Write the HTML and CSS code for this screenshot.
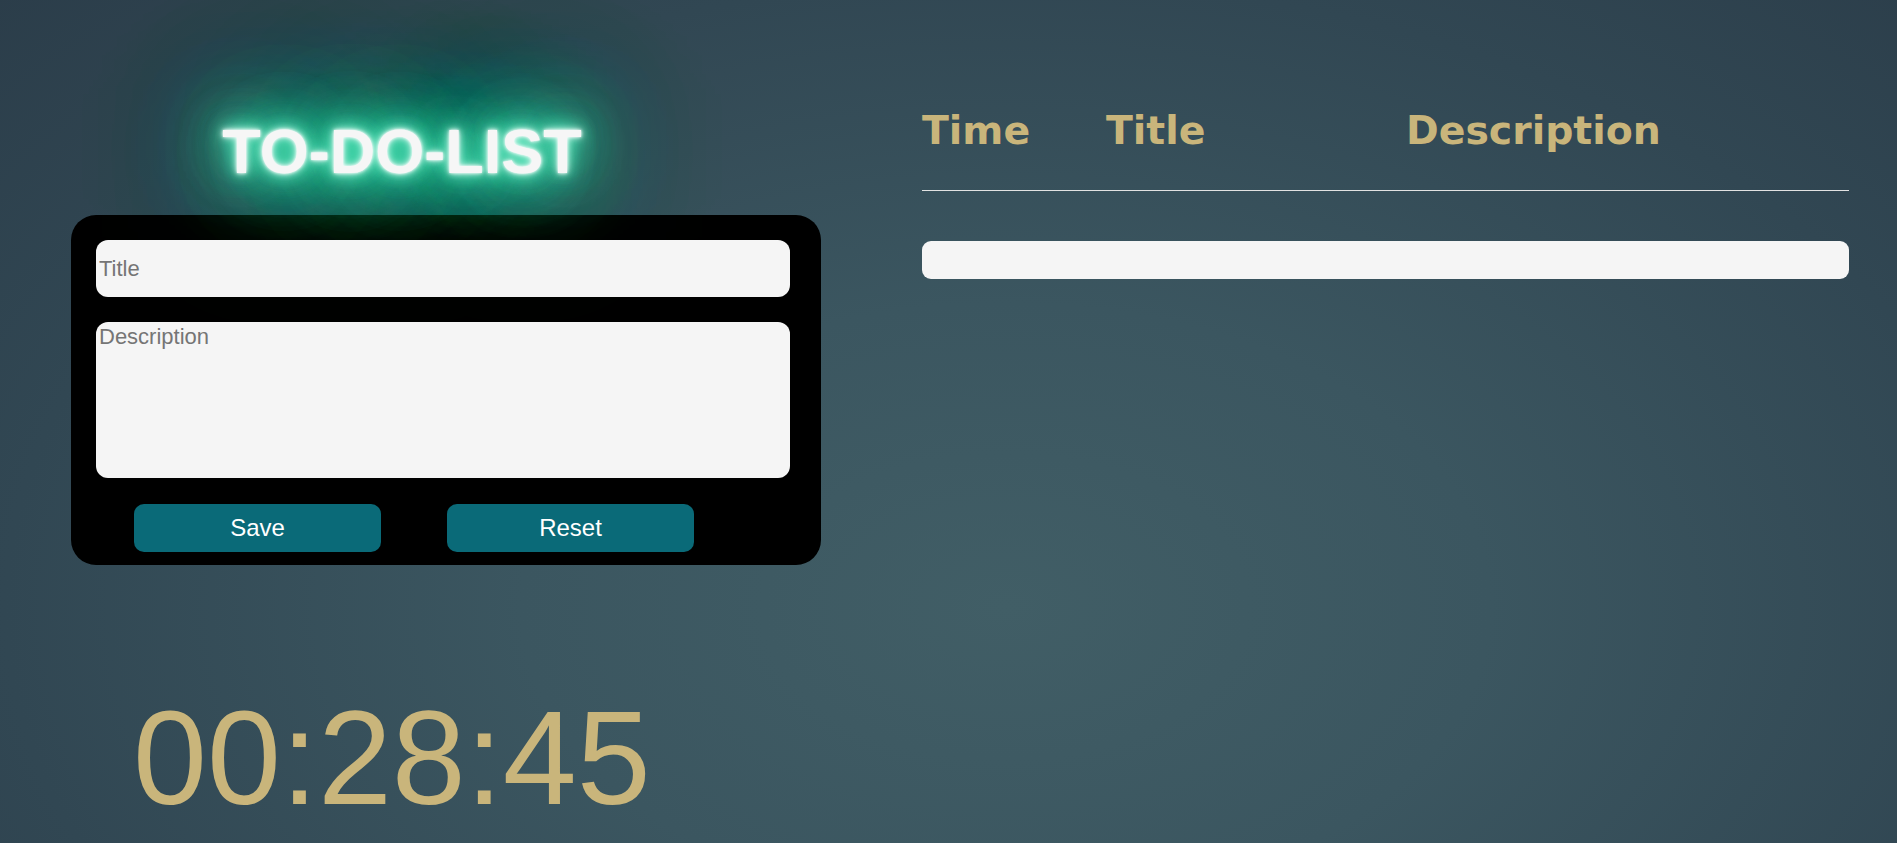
FILE: index.html
```html
<!DOCTYPE html>
<html lang="en">
<head>
<meta charset="utf-8">
<title>TO-DO-LIST</title>
<link rel="stylesheet" href="styles.css">
</head>
<body>
<div class="page">
  <section class="left">
    <h1 class="brand">TO-DO-LIST</h1>
    <form class="card">
      <input class="field" type="text" placeholder="Title">
      <textarea class="field area" placeholder="Description"></textarea>
      <div class="actions">
        <button type="button" class="btn">Save</button>
        <button type="button" class="btn">Reset</button>
      </div>
    </form>
    <div class="clock">00:28:45</div>
  </section>
  <section class="right">
    <div class="head">
      <span>Time</span>
      <span>Title</span>
      <span>Description</span>
    </div>
    <hr class="rule">
    <div class="row"></div>
  </section>
</div>
</body>
</html>
```

FILE: styles.css
```css
html, body {
  margin: 0;
  height: 100%;
}
body {
  background: radial-gradient(ellipse 85% 120% at 53% 72%, #415e66 0%, #3b5660 30%, #314753 62%, #283845 100%);
  font-family: "Liberation Sans", Arial, sans-serif;
  overflow: hidden;
}
.page {
  display: flex;
  padding-left: 71px;
  height: 843px;
  box-sizing: border-box;
}
.left {
  width: 750px;
  display: block;
  padding-top: 119px;
}
.brand {
  margin: 0 0 32px 0;
  width: 662px;
  text-align: center;
  font-family: "Liberation Sans", Arial, sans-serif;
  font-weight: bold;
  font-size: 63px;
  line-height: 64px;
  color: #f6f6f6;
  text-shadow:
    0 0 3px #ffffff,
    0 0 7px #ffffff,
    0 0 15px #6ff5cc,
    0 0 25px #4ae8b8,
    0 0 40px #3ee0ae,
    0 0 55px #38d8a6,
    0 0 70px #33cf9d,
    0 0 85px #2ec595,
    0 0 100px #2abb8c,
    0 0 120px #26b084,
    0 0 140px #22a67c,
    0 0 160px #1f9c74;
}
.card {
  background: #000;
  border-radius: 25px;
  height: 350px;
  box-sizing: border-box;
  padding: 25px 31px 13px 25px;
  display: flex;
  flex-direction: column;
}
.field {
  display: block;
  width: 694px;
  height: 57px;
  box-sizing: border-box;
  border: none;
  border-radius: 12px;
  background: #f5f5f5;
  font-family: "Liberation Sans", Arial, sans-serif;
  font-size: 22px;
  color: #333;
  padding: 0 3px;
  outline: none;
  margin: 0;
}
.field::placeholder {
  color: #757575;
}
.area {
  margin-top: 25px;
  height: 156px;
  padding: 2px 3px;
  resize: none;
}
.actions {
  display: flex;
  gap: 66px;
  margin-top: 26px;
  padding-left: 38px;
}
.btn {
  width: 247px;
  height: 48px;
  border: none;
  border-radius: 10px;
  background: #0a6a78;
  color: #ffffff;
  font-family: "Liberation Sans", Arial, sans-serif;
  font-size: 24px;
  padding: 0;
}
.clock {
  margin-top: 117px;
  padding-left: 62px;
  font-family: "Liberation Sans", Arial, sans-serif;
  font-size: 133px;
  color: #c9b57b;
  white-space: nowrap;
}
.right {
  margin-left: 101px;
  width: 927px;
  padding-top: 107px;
}
.head {
  display: grid;
  grid-template-columns: 184px 300px 1fr;
  font-family: "DejaVu Sans", Verdana, sans-serif;
  font-weight: bold;
  font-size: 39.4px;
  color: #c9b57b;
}
.rule {
  margin: 37px 0 0 0;
  border: none;
  height: 1px;
  background: #e2e2e2;
}
.row {
  margin-top: 50px;
  height: 38px;
  border-radius: 9px;
  background: #f5f5f5;
}
```
